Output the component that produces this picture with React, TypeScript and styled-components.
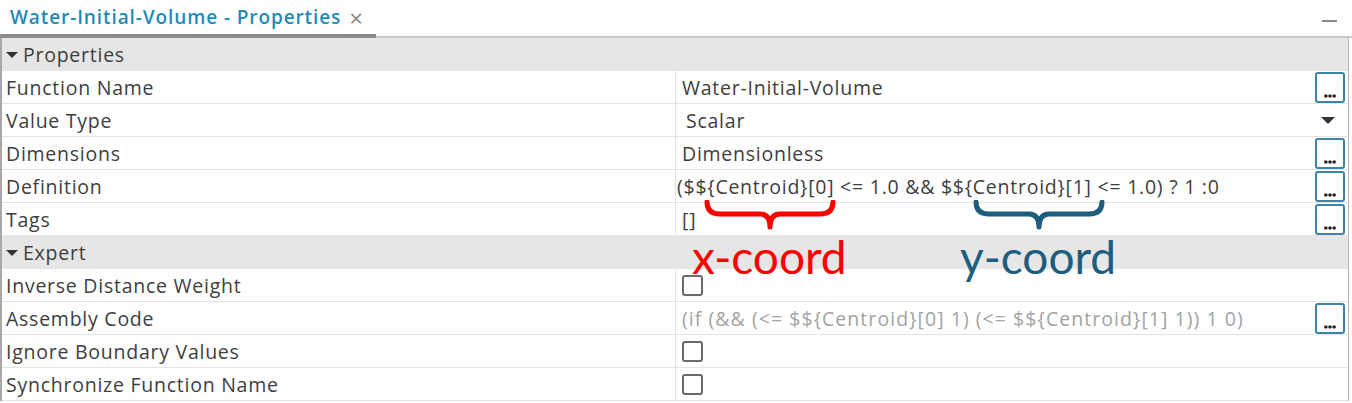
import React from "react";
import styled, { createGlobalStyle } from "styled-components";

const Global = createGlobalStyle`
  html, body { margin: 0; padding: 0; background: #ffffff; }
  body { font-family: "Open Sans", "Noto Sans", sans-serif; }
`;

const Root = styled.div`
  position: relative;
  width: 1352px;
  height: 403px;
  overflow: hidden;
  background: #fff;
`;

const TabBar = styled.div`
  display: flex;
  height: 38px;
`;

const Tab = styled.div`
  width: 376px;
  box-sizing: border-box;
  border-bottom: 4px solid #8b8b8b;
  display: flex;
  align-items: center;
  padding-left: 10px;
  gap: 8px;
  font-size: 19px;
  font-weight: 600;
  color: #1f8bb7;
  letter-spacing: 0.9px;
  white-space: nowrap;
`;

const Close = styled.span`
  color: #8a8a8a;
  font-weight: 400;
  font-size: 24px;
  letter-spacing: 0;
`;

const TabFiller = styled.div`
  flex: 1;
  box-sizing: border-box;
  border-bottom: 2px solid #c9c9c9;
  display: flex;
  justify-content: flex-end;
  align-items: center;
  padding-right: 15px;
`;

const Minimize = styled.span`
  width: 15px;
  height: 2px;
  background: #8a8a8a;
  margin-top: 6px;
`;

const Panel = styled.div`
  width: 1349px;
  box-sizing: border-box;
  border-left: 2px solid #a8a8a8;
  border-right: 1px solid #b5b5b5;
  display: grid;
  grid-template-columns: 674px 1fr;
  font-size: 19.5px;
  letter-spacing: 0.75px;
`;

const Header = styled.div`
  grid-column: 1 / -1;
  height: 33px;
  box-sizing: border-box;
  background: #e6e6e6;
  display: flex;
  align-items: center;
  padding-left: 4px;
  gap: 5px;
  color: #3e3e3e;
`;

const Caret = styled.span`
  width: 0;
  height: 0;
  border-left: 6px solid transparent;
  border-right: 6px solid transparent;
  border-top: 6px solid #333;
  margin-top: 1px;
`;

const Label = styled.div`
  height: 33px;
  box-sizing: border-box;
  border-bottom: 1px solid #e4e4e4;
  border-right: 1px solid #e4e4e4;
  display: flex;
  align-items: center;
  padding-left: 4px;
  color: #3e3e3e;
  white-space: nowrap;
`;

const Value = styled.div<{ $muted?: boolean; $indent?: number }>`
  height: 33px;
  box-sizing: border-box;
  border-bottom: 1px solid #e4e4e4;
  display: flex;
  align-items: center;
  padding-left: ${(p) => p.$indent ?? 6}px;
  padding-right: 3px;
  color: ${(p) => (p.$muted ? "#a3a3a3" : "#3e3e3e")};
  letter-spacing: ${(p) => (p.$muted ? "1.05px" : "0.75px")};
  white-space: nowrap;
`;

const ValueText = styled.span`
  flex: 1;
  overflow: hidden;
`;

const DotsButton = styled.button`
  width: 30px;
  height: 31px;
  flex: none;
  box-sizing: border-box;
  border: 2px solid #3d83a6;
  border-radius: 3px;
  background: #fff;
  padding: 0 0 3px 0;
  display: flex;
  align-items: flex-end;
  justify-content: center;
  margin-top: 1px;
`;

const DropArrow = styled.span`
  width: 0;
  height: 0;
  border-left: 7px solid transparent;
  border-right: 7px solid transparent;
  border-top: 7px solid #333;
  margin-right: 10px;
`;

const Check = styled.span`
  width: 21px;
  height: 21px;
  box-sizing: border-box;
  border: 2px solid #6a6a6a;
  border-radius: 3px;
  background: #fff;
`;

const Annot = styled.div<{ $x: number; $y: number }>`
  position: absolute;
  left: ${(p) => p.$x}px;
  top: ${(p) => p.$y}px;
  pointer-events: none;
`;

const AnnotText = styled.div<{ $color: string; $x: number; $y: number }>`
  position: absolute;
  left: ${(p) => p.$x}px;
  top: ${(p) => p.$y}px;
  font-family: Lato, "Open Sans", sans-serif;
  font-size: 46px;
  line-height: 1;
  color: ${(p) => p.$color};
`;

const Dots = () => (
  <svg width="12" height="4" viewBox="0 0 12 4">
    <rect x="0" y="1.5" width="12" height="1" fill="#222" />
    <rect x="0.5" y="0.5" width="2.5" height="3" fill="#222" />
    <rect x="4.75" y="0.5" width="2.5" height="3" fill="#222" />
    <rect x="9" y="0.5" width="2.5" height="3" fill="#222" />
  </svg>
);

const Brace = ({ color, width }: { color: string; width: number }) => {
  const c = width / 2;
  const d = `M3,2 Q3,14 16,14 L${c - 10},14 Q${c},14 ${c},27 Q${c},14 ${c + 10},14 L${width - 16},14 Q${width - 3},14 ${width - 3},2`;
  return (
    <svg width={width} height="30" viewBox={`0 0 ${width} 30`}>
      <path d={d} fill="none" stroke={color} strokeWidth="5" strokeLinecap="round" strokeLinejoin="round" />
    </svg>
  );
};

const Ellipsis = () => (
  <DotsButton>
    <Dots />
  </DotsButton>
);

export default function App() {
  return (
    <Root>
      <Global />
      <TabBar>
        <Tab>
          Water-Initial-Volume - Properties <Close>×</Close>
        </Tab>
        <TabFiller>
          <Minimize />
        </TabFiller>
      </TabBar>
      <Panel>
        <Header>
          <Caret /> Properties
        </Header>
        <Label>Function Name</Label>
        <Value>
          <ValueText>Water-Initial-Volume</ValueText>
          <Ellipsis />
        </Value>
        <Label>Value Type</Label>
        <Value $indent={10}>
          <ValueText>Scalar</ValueText>
          <DropArrow />
        </Value>
        <Label>Dimensions</Label>
        <Value>
          <ValueText>Dimensionless</ValueText>
          <Ellipsis />
        </Value>
        <Label>Definition</Label>
        <Value $indent={1}>
          <ValueText>($${"{"}Centroid{"}"}[0] &lt;= 1.0 &amp;&amp; $${"{"}Centroid{"}"}[1] &lt;= 1.0) ? 1 :0</ValueText>
          <Ellipsis />
        </Value>
        <Label>Tags</Label>
        <Value>
          <ValueText>[]</ValueText>
          <Ellipsis />
        </Value>
        <Header>
          <Caret /> Expert
        </Header>
        <Label>Inverse Distance Weight</Label>
        <Value>
          <Check />
        </Value>
        <Label>Assembly Code</Label>
        <Value $muted>
          <ValueText>(if (&amp;&amp; (&lt;= $${"{"}Centroid{"}"}[0] 1) (&lt;= $${"{"}Centroid{"}"}[1] 1)) 1 0)</ValueText>
          <Ellipsis />
        </Value>
        <Label>Ignore Boundary Values</Label>
        <Value>
          <Check />
        </Value>
        <Label>Synchronize Function Name</Label>
        <Value>
          <Check />
        </Value>
      </Panel>
      <Annot $x={704} $y={200}>
        <Brace color="#ff0000" width={132} />
      </Annot>
      <Annot $x={973} $y={200}>
        <Brace color="#1d5d7e" width={132} />
      </Annot>
      <AnnotText $color="#ff0000" $x={692} $y={234}>
        x-coord
      </AnnotText>
      <AnnotText $color="#1d5d7e" $x={960} $y={234}>
        y-coord
      </AnnotText>
    </Root>
  );
}
